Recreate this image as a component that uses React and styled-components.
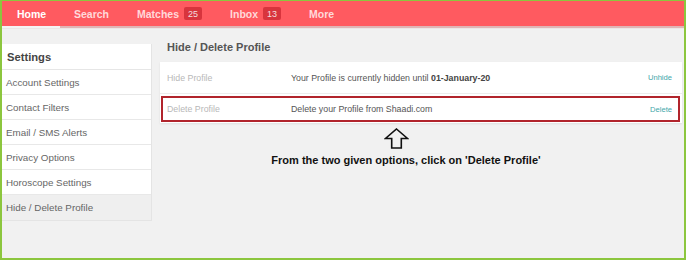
import React from "react";
import styled, { createGlobalStyle } from "styled-components";

const Global = createGlobalStyle`
  html, body { margin: 0; padding: 0; }
  body { font-family: "Liberation Sans", Arial, sans-serif; }
  * { box-sizing: border-box; }
`;

const Frame = styled.div`
  width: 686px;
  height: 260px;
  border-style: solid;
  border-color: #8cc63e;
  border-width: 1px 2px 2px 2px;
  background: #f1f1f1;
  display: flex;
  flex-direction: column;
  overflow: hidden;
`;

const Nav = styled.nav`
  height: 25px;
  flex: none;
  background: #ff5a60;
  display: flex;
  align-items: stretch;
  box-shadow: 0 2px 1px rgba(190, 70, 70, 0.35);
  position: relative;
  z-index: 1;
`;

const NavItem = styled.div`
  display: flex;
  align-items: center;
  gap: 5px;
  padding: 0 14px 0 ${(p) => (p.$active ? "15px" : "14px")};
  font-size: 10.5px;
  font-weight: bold;
  color: ${(p) => (p.$active ? "#ffffff" : "rgba(255,255,255,0.78)")};
  box-shadow: ${(p) => (p.$active ? "0 2px 0 #f4f4f4" : "none")};
  width: ${(p) => p.$w || "auto"};
`;

const Badge = styled.span`
  display: inline-flex;
  align-items: center;
  justify-content: center;
  min-width: 18px;
  height: 13px;
  padding: 0 3px;
  border-radius: 2px;
  background: #d8343d;
  color: #f3dede;
  font-size: 9px;
  font-weight: normal;
`;

const Content = styled.div`
  display: flex;
  align-items: flex-start;
  gap: 8px;
  padding: 14px 2px 0 0;
`;

const Sidebar = styled.aside`
  width: 150px;
  flex: none;
  margin-top: 4px;
  background: #fff;
  border-right: 1px solid #e4e4e4;
  border-bottom: 1px solid #e4e4e4;
`;

const SideHead = styled.div`
  height: 26px;
  display: flex;
  align-items: center;
  padding-left: 5px;
  font-size: 11.2px;
  font-weight: bold;
  color: #444;
  border-bottom: 1px solid #e6e6e6;
`;

const SideItem = styled.div`
  height: 25px;
  display: flex;
  align-items: center;
  padding-left: 4px;
  font-size: 9.8px;
  color: #666;
  background: ${(p) => (p.$active ? "#efefef" : "#fff")};
  border-bottom: ${(p) => (p.$last ? "none" : "1px solid #e8e8e8")};
`;

const Main = styled.main`
  flex: 1;
  display: flex;
  flex-direction: column;
`;

const Title = styled.h2`
  margin: 0 0 8px;
  padding-left: 7px;
  font-size: 11px;
  line-height: 14px;
  font-weight: bold;
  color: #555;
`;

const Card = styled.div`
  background: #fff;
  box-shadow: 0 1px 2px rgba(0, 0, 0, 0.08);
  display: flex;
  flex-direction: column;
`;

const Row = styled.div`
  display: flex;
  align-items: center;
  height: ${(p) => (p.$marked ? "26px" : "32px")};
  padding: ${(p) => (p.$marked ? "0 6px 0 4px" : "0 10px 0 7px")};
  margin: ${(p) => (p.$marked ? "2px 2px 1px 1px" : "0")};
  border: ${(p) => (p.$marked ? "2px solid #b1242c" : "none")};
  border-bottom: ${(p) =>
    p.$marked ? "2px solid #b1242c" : "1px solid #ededed"};
`;

const Label = styled.div`
  width: 124px;
  flex: none;
  font-size: 8.8px;
  color: #b8b8b8;
`;

const Desc = styled.div`
  flex: 1;
  font-size: 8.8px;
  color: #555;
  b { color: #444; }
`;

const Action = styled.a`
  font-size: 7.6px;
  color: #3fa7aa;
  text-decoration: none;
`;

const Annotation = styled.div`
  display: flex;
  flex-direction: column;
  align-items: center;
  margin-right: 30px;
  padding-top: 5px;
`;

const ArrowWrap = styled.div`
  margin-right: 20px;
  height: 21px;
  display: flex;
`;

const Caption = styled.div`
  margin-top: 5px;
  font-size: 11px;
  line-height: 13px;
  font-weight: bold;
  color: #111;
`;

const sideItems = [
  "Account Settings",
  "Contact Filters",
  "Email / SMS Alerts",
  "Privacy Options",
  "Horoscope Settings",
  "Hide / Delete Profile",
];

export default function App() {
  return (
    <>
      <Global />
      <Frame>
        <Nav>
          <NavItem $active $w="58px">Home</NavItem>
          <NavItem>Search</NavItem>
          <NavItem>
            Matches <Badge>25</Badge>
          </NavItem>
          <NavItem>
            Inbox <Badge>13</Badge>
          </NavItem>
          <NavItem>More</NavItem>
        </Nav>
        <Content>
          <Sidebar>
            <SideHead>Settings</SideHead>
            {sideItems.map((t, i) => (
              <SideItem
                key={t}
                $active={i === sideItems.length - 1}
                $last={i === sideItems.length - 1}
              >
                {t}
              </SideItem>
            ))}
          </Sidebar>
          <Main>
            <Title>Hide / Delete Profile</Title>
            <Card>
              <Row>
                <Label>Hide Profile</Label>
                <Desc>
                  Your Profile is currently hidden until <b>01-January-20</b>
                </Desc>
                <Action>Unhide</Action>
              </Row>
              <Row $marked>
                <Label>Delete Profile</Label>
                <Desc>Delete your Profile from Shaadi.com</Desc>
                <Action>Delete</Action>
              </Row>
            </Card>
            <Annotation>
              <ArrowWrap>
                <svg width="25" height="21" viewBox="0 0 25 21">
                  <path
                    d="M12.5 1 L23.5 10.5 L17.3 10.5 L17.3 20 L7.7 20 L7.7 10.5 L1.5 10.5 Z"
                    fill="none"
                    stroke="#111"
                    strokeWidth="1.6"
                    strokeLinejoin="miter"
                  />
                </svg>
              </ArrowWrap>
              <Caption>
                From the two given options, click on 'Delete Profile'
              </Caption>
            </Annotation>
          </Main>
        </Content>
      </Frame>
    </>
  );
}
